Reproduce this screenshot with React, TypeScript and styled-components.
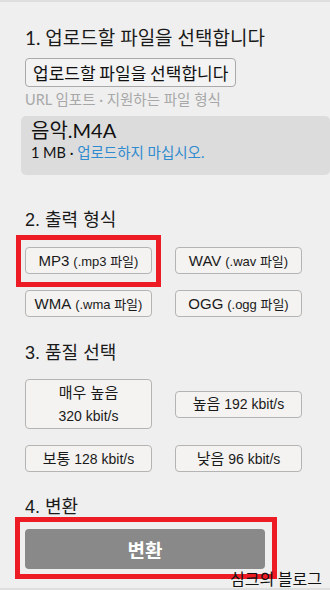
import styled, { createGlobalStyle } from "styled-components";

const Global = createGlobalStyle`
  html, body {
    margin: 0;
    padding: 0;
    background: #efefef;
  }
  * {
    box-sizing: border-box;
  }
`;

const Page = styled.div`
  position: relative;
  width: 330px;
  height: 590px;
  overflow: hidden;
  background: #efefef;
  border-top: 2px solid #dedede;
  border-bottom: 2px solid #dedede;
  padding: 24px 0 0 25px;
  font-family: "Liberation Sans", "Noto Sans CJK KR", sans-serif;
  color: #222;
`;

const Heading = styled.h2<{ $lato?: boolean }>`
  margin: 0;
  font-weight: normal;
  font-size: ${(p) => (p.$lato ? "19px" : "18px")};
  line-height: 24px;
  font-family: ${(p) =>
    p.$lato
      ? `Lato, "Noto Sans CJK KR", sans-serif`
      : `"Liberation Sans", "Noto Sans CJK KR", sans-serif`};
  color: #1a1a1a;
`;

const Section = styled.section<{ $top: number }>`
  margin-top: ${(p) => p.$top}px;
`;

const UploadButton = styled.button`
  display: block;
  margin-top: 8px;
  height: 29px;
  padding: 0 7px;
  border: 1px solid #aaa;
  border-radius: 4px;
  background: #f3f3f3;
  font-family: "Noto Sans CJK KR", sans-serif;
  font-size: 17px;
  line-height: 20px;
  color: #111;
`;

const Hint = styled.div`
  margin-top: 4px;
  font-family: Lato, "Noto Sans CJK KR", sans-serif;
  font-size: 14.5px;
  line-height: 18px;
  color: #a8a8a8;
`;

const FileBox = styled.div`
  margin: 7px 0 0 -4px;
  height: 59px;
  background: #dcdcdc;
  border-radius: 5px;
  padding: 1px 0 0 10px;
`;

const FileName = styled.div`
  font-family: Lato, "Noto Sans CJK KR", sans-serif;
  font-size: 20px;
  line-height: 26px;
  color: #111;
`;

const FileMeta = styled.div`
  margin-top: 0;
  font-family: Lato, "Noto Sans CJK KR", sans-serif;
  font-size: 14.5px;
  line-height: 20px;
  color: #111;

  a {
    color: #2f8bd0;
    text-decoration: none;
  }
`;

const Grid = styled.div<{ $top: number }>`
  margin-top: ${(p) => p.$top}px;
  display: grid;
  grid-template-columns: 127px 127px;
  column-gap: 23px;
  row-gap: 16px;
  align-items: center;
`;

const Choice = styled.button<{ $tall?: boolean }>`
  height: ${(p) => (p.$tall ? "50px" : "27px")};
  padding: 0;
  border: 1px solid #b4b4b4;
  border-radius: 4px;
  background: #f4f3f1;
  font-family: "Liberation Sans", "Noto Sans CJK KR", sans-serif;
  font-size: 14px;
  line-height: 17px;
  color: #1a1a1a;
  display: flex;
  flex-direction: column;
  align-items: center;
  justify-content: center;
  gap: 7px;
`;

const Big = styled.span`
  font-size: 15px;
`;

const Small = styled.span`
  font-size: 13px;
`;

const ConvertButton = styled.button`
  display: block;
  margin-top: 10px;
  width: 240px;
  height: 40px;
  border: none;
  border-radius: 4px;
  background: #898989;
  color: #fff;
  font-family: "Noto Sans CJK KR", sans-serif;
  font-weight: bold;
  font-size: 19px;
`;

const Highlight = styled.div<{ $x: number; $y: number; $w: number; $h: number }>`
  position: absolute;
  left: ${(p) => p.$x}px;
  top: ${(p) => p.$y}px;
  width: ${(p) => p.$w}px;
  height: ${(p) => p.$h}px;
  border: 5px solid #ed1c24;
  pointer-events: none;
`;

const Watermark = styled.div`
  position: absolute;
  right: 8px;
  bottom: 0;
  font-family: "Noto Sans CJK KR", sans-serif;
  font-size: 16px;
  line-height: 19px;
  color: #111;
`;

const formats = [
  { main: "MP3", ext: "(.mp3 파일)" },
  { main: "WAV", ext: "(.wav 파일)" },
  { main: "WMA", ext: "(.wma 파일)" },
  { main: "OGG", ext: "(.ogg 파일)" },
];

export default function App() {
  return (
    <>
      <Global />
      <Page>
        <Heading $lato>1. 업로드할 파일을 선택합니다</Heading>
        <UploadButton>업로드할 파일을 선택합니다</UploadButton>
        <Hint>URL 임포트 · 지원하는 파일 형식</Hint>
        <FileBox>
          <FileName>음악.M4A</FileName>
          <FileMeta>
            1 MB · <a href="#">업로드하지 마십시오.</a>
          </FileMeta>
        </FileBox>

        <Section $top={33}>
          <Heading>2. 출력 형식</Heading>
          <Grid $top={15}>
            {formats.map((f) => (
              <Choice key={f.main}>
                <span>
                  <Big>{f.main}</Big> <Small>{f.ext}</Small>
                </span>
              </Choice>
            ))}
          </Grid>
        </Section>

        <Section $top={24}>
          <Heading>3. 품질 선택</Heading>
          <Grid $top={14}>
            <Choice $tall>
              <Big>매우 높음</Big>
              <span>320 kbit/s</span>
            </Choice>
            <Choice>
              <span>
                <Big>높음</Big> 192 kbit/s
              </span>
            </Choice>
            <Choice>
              <span>
                <Big>보통</Big> 128 kbit/s
              </span>
            </Choice>
            <Choice>
              <span>
                <Big>낮음</Big> 96 kbit/s
              </span>
            </Choice>
          </Grid>
        </Section>

        <Section $top={23}>
          <Heading>4. 변환</Heading>
          <ConvertButton>변환</ConvertButton>
        </Section>

        <Highlight $x={16} $y={233} $w={145} $h={52} />
        <Highlight $x={15} $y={515} $w={262} $h={62} />
        <Watermark>심크의 블로그</Watermark>
      </Page>
    </>
  );
}
